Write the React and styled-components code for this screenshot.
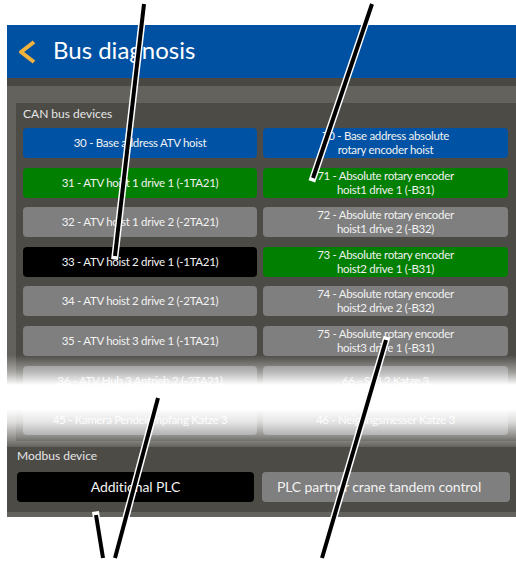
import React from 'react'
import styled, { createGlobalStyle } from 'styled-components'

const GlobalStyle = createGlobalStyle`
  html, body {
    margin: 0;
    padding: 0;
    background: #ffffff;
    font-family: Lato, "Open Sans", sans-serif;
  }
`

const Page = styled.div`
  position: relative;
  width: 516px;
  height: 561px;
  overflow: hidden;
  padding: 25px 0 0 7px;
  box-sizing: border-box;
`

const Screen = styled.div`
  background: #64625c;
  padding-bottom: 5px;
`

const Header = styled.div`
  height: 53px;
  background: #0051a2;
  display: flex;
  align-items: center;
  padding-left: 9px;
  gap: 15px;
`

const Title = styled.div`
  color: #ffffff;
  font-size: 24px;
  line-height: 1;
  padding-bottom: 3px;
`

const HeaderShadow = styled.div`
  height: 8px;
  background: #4a4843;
`

const CanPanel = styled.div`
  margin: 17px 0 6px 9px;
  background: #4c4b46;
  padding: 4px 8px 6px 7px;
`

const SectionLabel = styled.div`
  color: #e6e6e6;
  font-size: 12px;
  line-height: 14px;
  height: ${({ h }) => h}px;
`

const DeviceGrid = styled.div`
  display: grid;
  grid-template-columns: 234px 245px;
  column-gap: 6px;
  row-gap: 9.6px;
`

const colors = {
  blue: '#0052a5',
  green: '#007f00',
  gray: '#7f7f7f',
  black: '#000000',
}

const Device = styled.div`
  height: 30px;
  border-radius: 4px;
  background: ${({ tone }) => colors[tone]};
  color: #f2f2f2;
  font-size: 11.5px;
  line-height: 14px;
  letter-spacing: -0.3px;
  display: flex;
  align-items: center;
  justify-content: center;
  text-align: center;
`

const ModbusPanel = styled.div`
  background: #4c4b46;
  padding: 2px 6px 10px 10px;
`

const ModbusGrid = styled.div`
  display: grid;
  grid-template-columns: 237px 248px;
  column-gap: 8px;
`

const ModbusButton = styled(Device)`
  font-size: 14px;
  letter-spacing: -0.1px;
  padding-right: ${({ shift }) => shift || 0}px;
`

// white tear across the list where rows are left out
const Tear = styled.div`
  position: absolute;
  left: 0;
  right: 0;
  top: 355px;
  height: 92px;
  background: linear-gradient(
    to bottom,
    rgba(255, 255, 255, 0) 0px,
    rgba(255, 255, 255, 0.45) 17px,
    #ffffff 30px,
    #ffffff 54px,
    rgba(255, 255, 255, 0.8) 67px,
    rgba(255, 255, 255, 0.4) 80px,
    rgba(255, 255, 255, 0) 92px
  );
`

const Callouts = styled.svg`
  position: absolute;
  left: 0;
  top: 0;
`

const canDevices = [
  ['blue', '30 - Base address ATV hoist'],
  ['blue', '70 - Base address absolute\nrotary encoder hoist'],
  ['green', '31 - ATV hoist 1 drive 1 (-1TA21)'],
  ['green', '71 - Absolute rotary encoder\nhoist1 drive 1 (-B31)'],
  ['gray', '32 - ATV hoist 1 drive 2 (-2TA21)'],
  ['gray', '72 - Absolute rotary encoder\nhoist1 drive 2 (-B32)'],
  ['black', '33 - ATV hoist 2 drive 1 (-1TA21)'],
  ['green', '73 - Absolute rotary encoder\nhoist2 drive 1 (-B31)'],
  ['gray', '34 - ATV hoist 2 drive 2 (-2TA21)'],
  ['gray', '74 - Absolute rotary encoder\nhoist2 drive 2 (-B32)'],
  ['gray', '35 - ATV hoist 3 drive 1 (-1TA21)'],
  ['gray', '75 - Absolute rotary encoder\nhoist3 drive 1 (-B31)'],
  ['gray', '36 - ATV Hub 3 Antrieb 2 (-2TA21)'],
  ['gray', '66 - SDI 2 Katze 3'],
  ['gray', '45 - Kamera Pendelempfang Katze 3'],
  ['gray', '46 - Neigungsmesser Katze 3'],
]

// callout lines drawn on top of the screen
const lines = [
  [144, 4, 115, 256],
  [372, 4, 313, 178],
  [386, 340, 322, 558],
  [158, 398, 115, 558],
  [96, 515, 103, 558],
]

const BackArrow = () => (
  <svg width="22" height="26" viewBox="0 0 22 26">
    <path d="M18 3 L5 13 L18 23" fill="none" stroke="#f2b33d" strokeWidth="4" strokeLinejoin="round" />
  </svg>
)

const Label = ({ text }) => text.split('\n').map((t, i) => <div key={i}>{t}</div>)

export default function App() {
  return (
    <Page>
      <GlobalStyle />
      <Screen>
        <Header>
          <BackArrow />
          <Title>Bus diagnosis</Title>
        </Header>
        <HeaderShadow />
        <CanPanel>
          <SectionLabel h={21}>CAN bus devices</SectionLabel>
          <DeviceGrid>
            {canDevices.map(([tone, text]) => (
              <Device key={text} tone={tone}>
                <div><Label text={text} /></div>
              </Device>
            ))}
          </DeviceGrid>
        </CanPanel>
        <ModbusPanel>
          <SectionLabel h={23}>Modbus device</SectionLabel>
          <ModbusGrid>
            <ModbusButton tone="black">Additional PLC</ModbusButton>
            <ModbusButton tone="gray" shift={14}>PLC partner crane tandem control</ModbusButton>
          </ModbusGrid>
        </ModbusPanel>
      </Screen>
      <Tear />
      <Callouts width="516" height="561">
        {lines.map(([x1, y1, x2, y2], i) => (
          <g key={i}>
            <line x1={x1} y1={y1} x2={x2} y2={y2} stroke="#ffffff" strokeWidth="7" strokeLinecap="square" />
            <line x1={x1} y1={y1} x2={x2} y2={y2} stroke="#000000" strokeWidth="4" />
          </g>
        ))}
      </Callouts>
    </Page>
  )
}
